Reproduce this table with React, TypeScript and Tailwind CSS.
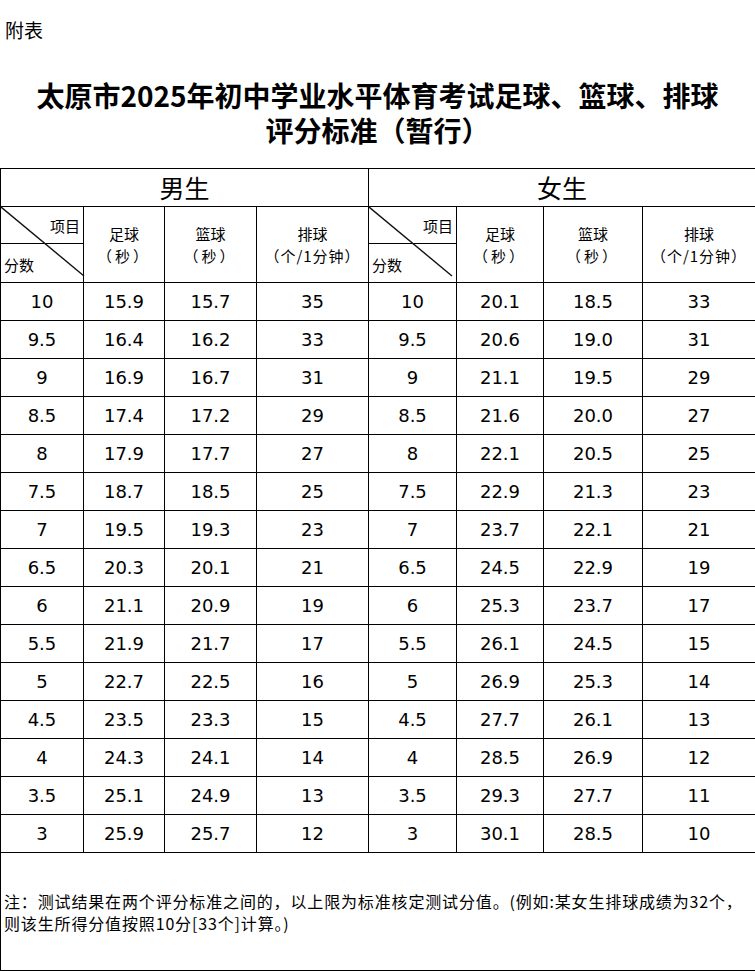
import React from 'react'

const rows: [string, string, string, string, string, string, string, string][] = [
  ['10', '15.9', '15.7', '35', '10', '20.1', '18.5', '33'],
  ['9.5', '16.4', '16.2', '33', '9.5', '20.6', '19.0', '31'],
  ['9', '16.9', '16.7', '31', '9', '21.1', '19.5', '29'],
  ['8.5', '17.4', '17.2', '29', '8.5', '21.6', '20.0', '27'],
  ['8', '17.9', '17.7', '27', '8', '22.1', '20.5', '25'],
  ['7.5', '18.7', '18.5', '25', '7.5', '22.9', '21.3', '23'],
  ['7', '19.5', '19.3', '23', '7', '23.7', '22.1', '21'],
  ['6.5', '20.3', '20.1', '21', '6.5', '24.5', '22.9', '19'],
  ['6', '21.1', '20.9', '19', '6', '25.3', '23.7', '17'],
  ['5.5', '21.9', '21.7', '17', '5.5', '26.1', '24.5', '15'],
  ['5', '22.7', '22.5', '16', '5', '26.9', '25.3', '14'],
  ['4.5', '23.5', '23.3', '15', '4.5', '27.7', '26.1', '13'],
  ['4', '24.3', '24.1', '14', '4', '28.5', '26.9', '12'],
  ['3.5', '25.1', '24.9', '13', '3.5', '29.3', '27.7', '11'],
  ['3', '25.9', '25.7', '12', '3', '30.1', '28.5', '10'],
]

const cjk = { fontFamily: '"Noto Sans CJK SC", "DejaVu Sans", sans-serif' }
const num = { fontFamily: '"DejaVu Sans", "Noto Sans CJK SC", sans-serif' }

function DiagonalCell() {
  return (
    <td className="relative border border-black p-0 align-top">
      <div className="flex h-[75px] flex-col text-[15px] leading-none" style={cjk}>
        <div className="flex h-[37px] items-center justify-end border-b border-black pr-[3px]">项目</div>
        <div className="flex flex-1 items-center pl-[3px] pt-[2px]">分数</div>
      </div>
      <svg className="pointer-events-none absolute left-0 top-0" width="84" height="76" viewBox="0 0 84 76">
        <line x1="0" y1="0" x2="83" y2="69" stroke="#111" strokeWidth="1.4" />
      </svg>
    </td>
  )
}

function ItemHeads() {
  return (
    <>
      <td className="border border-black text-center text-[15px] leading-[22px]" style={cjk}>
        足球<br /><span className="tracking-[3px]">（秒）</span>
      </td>
      <td className="border border-black text-center text-[15px] leading-[22px]" style={cjk}>
        篮球<br /><span className="tracking-[3px]">（秒）</span>
      </td>
      <td className="border border-black text-center text-[15px] leading-[22px]" style={cjk}>
        排球<br /><span className="tracking-[1px]">（个/1分钟）</span>
      </td>
    </>
  )
}

export default function App() {
  return (
    <div className="h-[971px] w-[755px] overflow-hidden bg-white text-black">
      <div className="pl-[5px] pt-[17px] text-[19px] leading-[26px]" style={cjk}>附表</div>

      <h1 className="mt-[35px] text-center text-[28px] font-bold leading-[35px]" style={cjk}>
        太原市2025年初中学业水平体育考试足球、篮球、排球
        <br />
        评分标准（暂行）
      </h1>

      <table className="mt-[20px] w-[755px] table-fixed border-collapse">
        <colgroup>
          <col className="w-[83px]" />
          <col className="w-[81px]" />
          <col className="w-[92px]" />
          <col className="w-[112px]" />
          <col className="w-[88px]" />
          <col className="w-[87px]" />
          <col className="w-[99px]" />
          <col className="w-[113px]" />
        </colgroup>
        <tbody>
          <tr className="h-[38px]">
            <td colSpan={4} className="border border-black text-center text-[25px] leading-none" style={cjk}>
              男生
            </td>
            <td colSpan={4} className="border border-black text-center text-[25px] leading-none" style={cjk}>
              女生
            </td>
          </tr>
          <tr className="h-[76px]">
            <DiagonalCell />
            <ItemHeads />
            <DiagonalCell />
            <ItemHeads />
          </tr>
          {rows.map((r, i) => (
            <tr key={i} className="h-[38px]">
              {r.map((v, j) => (
                <td key={j} className="border border-black p-0 text-center text-[18px] leading-none" style={num}>
                  {v}
                </td>
              ))}
            </tr>
          ))}
          <tr className="h-[118px]">
            <td colSpan={8} className="border border-black px-[3px] align-middle">
              <p className="whitespace-nowrap text-[16px] leading-[22px] tracking-[0.85px]" style={cjk}>
                注：测试结果在两个评分标准之间的，以上限为标准核定测试分值。(例如:某女生排球成绩为32个，
                <br />
                则该生所得分值按照10分[33个]计算。)
              </p>
            </td>
          </tr>
        </tbody>
      </table>
    </div>
  )
}
